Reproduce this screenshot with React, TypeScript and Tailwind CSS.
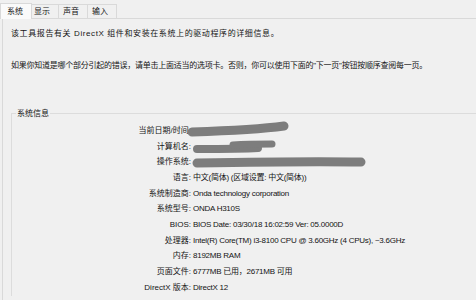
import React from "react";

const rows: [string, string][] = [
  ["当前日期/时间:", ""],
  ["计算机名:", ""],
  ["操作系统:", ""],
  ["语言:", "中文(简体) (区域设置: 中文(简体))"],
  ["系统制造商:", "Onda technology corporation"],
  ["系统型号:", "ONDA  H310S"],
  ["BIOS:", "BIOS Date: 03/30/18 16:02:59 Ver: 05.0000D"],
  ["处理器:", "Intel(R) Core(TM) i3-8100 CPU @ 3.60GHz (4 CPUs), ~3.6GHz"],
  ["内存:", "8192MB RAM"],
  ["页面文件:", "6777MB 已用，2671MB 可用"],
  ["DirectX 版本:", "DirectX 12"],
];

export default function App() {
  return (
    <div
      className="w-[476px] h-[300px] bg-[#f0f0f0] overflow-hidden text-[8px] text-[#141414] relative"
      style={{ fontFamily: '"Liberation Sans", "Noto Sans CJK SC", sans-serif' }}
    >
      {/* Tabs */}
      <div className="flex items-end h-[19px] border-b border-[#d9d9d9] pl-0">
        <div className="w-[32px] h-[16px] bg-[#fafafa] border-t border-l border-r border-[#d9d9d9] -mb-px flex items-center pl-[6px] relative z-10">
          系统
        </div>
        <div className="w-[27px] h-[14px] border-t border-r border-[#d9d9d9] flex items-center pl-[2px]">
          显示
        </div>
        <div className="w-[29px] h-[14px] border-t border-r border-[#d9d9d9] flex items-center pl-[4px]">
          声音
        </div>
        <div className="w-[29px] h-[14px] border-t border-r border-[#d9d9d9] flex items-center pl-[4px]">
          输入
        </div>
      </div>

      {/* Panel */}
      <div className="ml-[2px] h-[281px] border-l border-[#d9d9d9] pl-[8px] pt-[8px]">
        <div className="h-[13px] leading-[13px] tracking-[0.6px]">
          该工具报告有关 DirectX 组件和安装在系统上的驱动程序的详细信息。
        </div>
        <div className="h-[19px]" />
        <div className="h-[13px] leading-[13px] tracking-[-0.25px]">
          如果你知道是哪个部分引起的错误，请单击上面适当的选项卡。否则，你可以使用下面的"下一页"按钮按顺序查阅每一页。
        </div>

        {/* Group box */}
        <div className="mt-[41px] border-t border-l border-[#dcdcdc] relative pt-[9px]">
          <div className="absolute -top-[7px] left-[4px] px-[1px] bg-[#f0f0f0] leading-[13px]">
            系统信息
          </div>
          <div className="flex flex-col">
            {rows.map(([label, value]) => (
              <div key={label} className="flex h-[15.7px] items-center">
                <div className="w-[179px] text-right whitespace-nowrap">{label}</div>
                <div className="pl-[2px] whitespace-nowrap tracking-[-0.25px]">{value}</div>
              </div>
            ))}
          </div>
          {/* redaction scribbles */}
          <svg
            className="absolute left-0 top-0"
            width="400"
            height="70"
            viewBox="0 0 400 70"
            fill="none"
          >
            <path d="M180 18 C 210 17, 250 15, 272 12" stroke="#7d7d7d" strokeWidth="9" strokeLinecap="round" />
            <path d="M185 35 C 200 35, 230 35, 246 34" stroke="#7d7d7d" strokeWidth="8" strokeLinecap="round" />
            <path d="M221 31 C 235 30, 250 30, 260 30" stroke="#7d7d7d" strokeWidth="7" strokeLinecap="round" />
            <path d="M185 49 C 240 48, 300 47, 349 48" stroke="#7d7d7d" strokeWidth="9" strokeLinecap="round" />
          </svg>
        </div>
      </div>
    </div>
  );
}
